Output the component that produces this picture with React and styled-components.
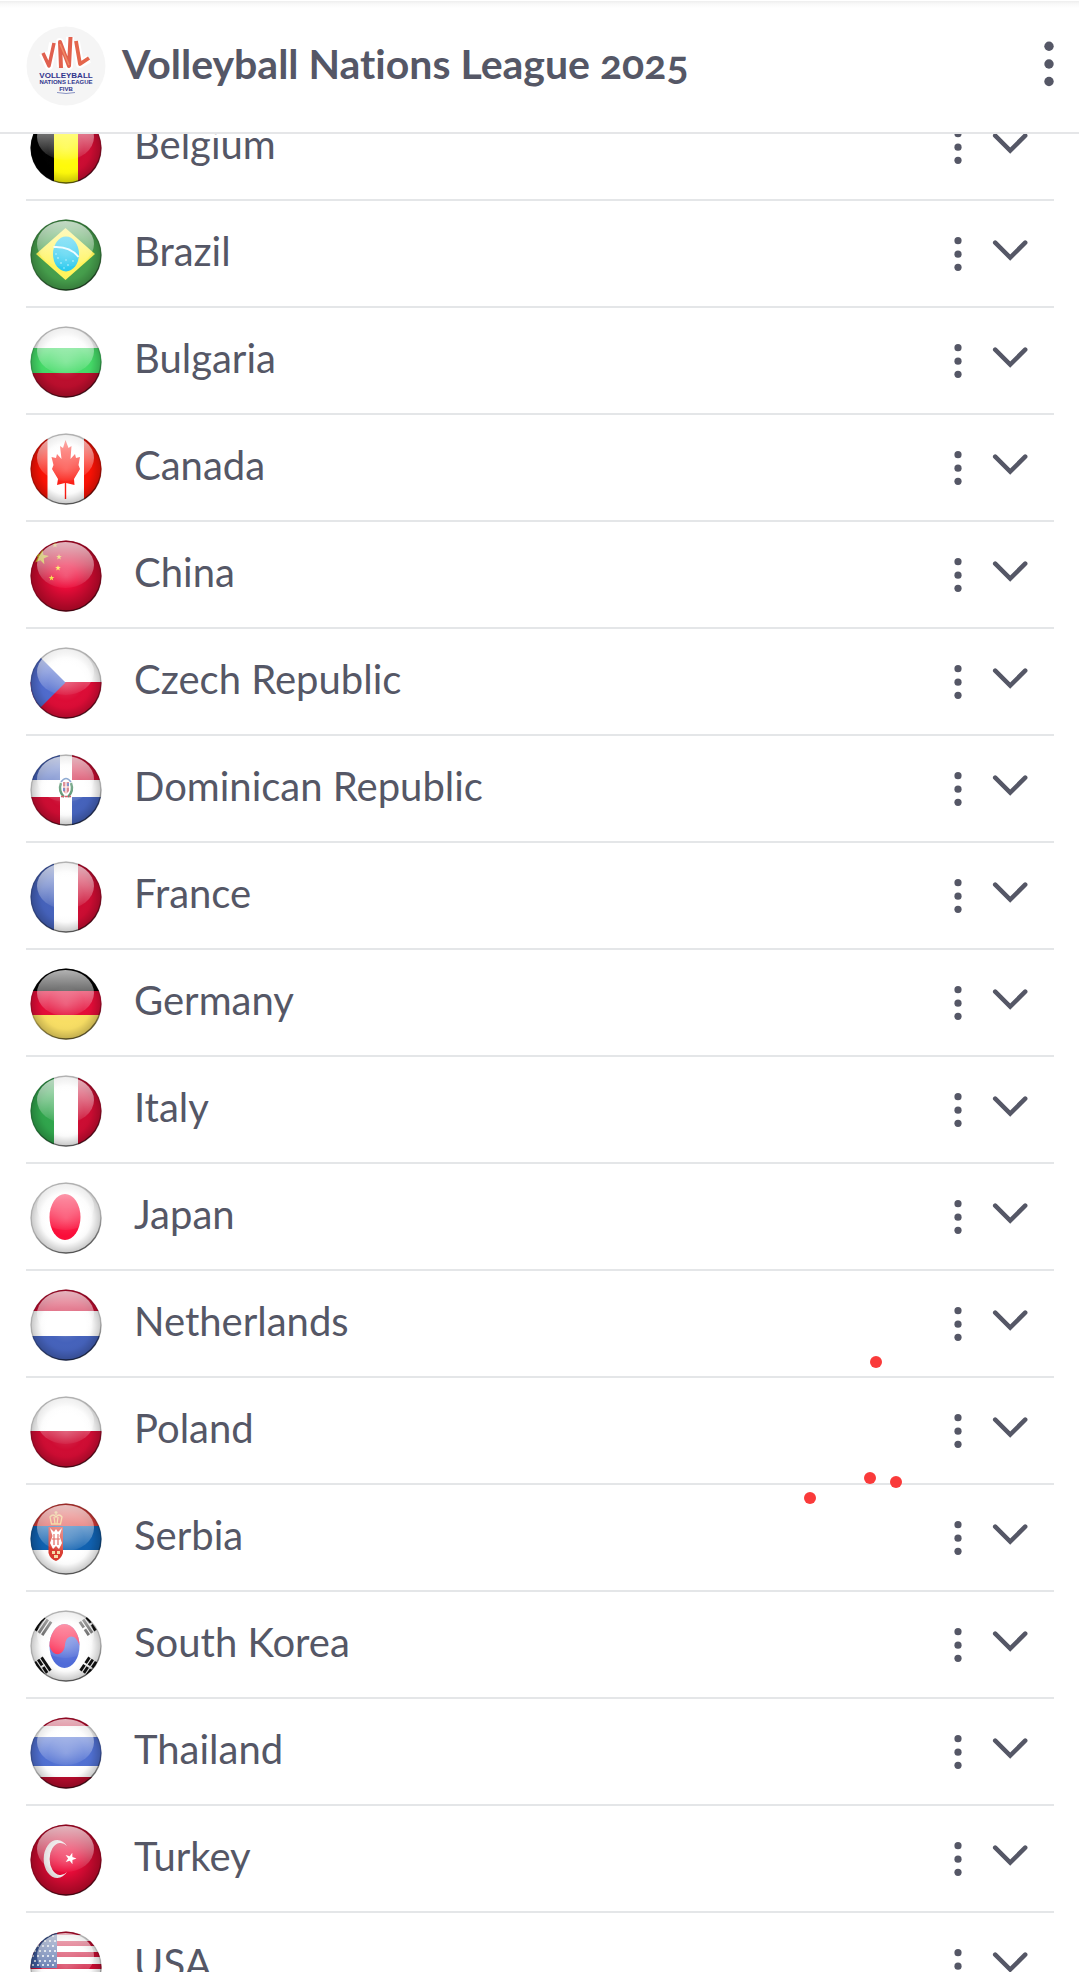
import React from 'react';
import styled, { createGlobalStyle } from 'styled-components';

const star = (cx, cy, r, turn = 0) =>
  Array.from({ length: 10 }, (_, i) => {
    const radius = i % 2 ? r * 0.4 : r;
    const angle = (Math.PI / 5) * i - Math.PI / 2 + turn;
    return `${cx + radius * Math.cos(angle)},${cy + radius * Math.sin(angle)}`;
  }).join(' ');

const RED = '#cc0c32';
const BLUE = '#4562bb';

const Rows = ({ bands }) =>
  bands.map(([color, y, end]) => (
    <rect key={y} x="0" y={y} width="72" height={end - y} fill={color} />
  ));

const Columns = ({ colors }) =>
  colors.map((color, i) => (
    <rect key={color} x={i * 24} y="0" width="24" height="72" fill={color} />
  ));

const Trigram = ({ x, y, turn, broken }) => (
  <g transform={`translate(${x} ${y}) rotate(${turn})`} fill="#111">
    {[-5, -1, 3].map((top, i) => (
      <React.Fragment key={top}>
        <rect x="-8" y={top} width="16" height="2.8" />
        {broken[i] && <rect x="-1" y={top - 1} width="2" height="5" fill="#fff" />}
      </React.Fragment>
    ))}
  </g>
);

const flags = {
  belgium: <Columns colors={['#000', '#fffa0a', RED]} />,
  brazil: (
    <>
      <rect width="72" height="72" fill="#469f4c" />
      <path d="M6 35 35.500 9 65 35 35.500 61Z" fill="#fff45c" />
      <ellipse cx="36" cy="35" rx="13" ry="17.500" fill="#27c9ee" />
      <path d="M23.500 28Q40 27 48.500 38" fill="none" stroke="#e6fbff" strokeWidth="2" />
      <g fill="#c9f6ff">
        <circle cx="28" cy="39" r=".8" />
        <circle cx="31" cy="44" r=".8" />
        <circle cx="36" cy="41" r=".7" />
        <circle cx="38" cy="46" r=".8" />
        <circle cx="43" cy="42" r=".8" />
        <circle cx="34" cy="49" r=".7" />
        <circle cx="26" cy="35" r=".7" />
      </g>
    </>
  ),
  bulgaria: <Rows bands={[['#fff', 0, 22], ['#45db68', 22, 47], ['#bb0e2d', 47, 72]]} />,
  canada: (
    <>
      <rect width="72" height="72" fill="#fff" />
      <path d="M0 0H17.500V72H0ZM54 0H72V72H54Z" fill="#fa1205" />
      <path
        d="M35.500 7 38.500 15 41.500 13 40.500 26 45 21 46 25 50 24 48.500 32 50 36 44 46 44.500 52 36.200 50V66H34.800V50L27 52 28 46 22 36 23.500 32 21.500 24 26 25 27 21 31.500 26 30 13 33 15Z"
        fill="#fb1b12"
      />
    </>
  ),
  china: (
    <>
      <rect width="72" height="72" fill="#ed0c3a" />
      <g fill="#ffe923">
        <polygon points={star(11, 17, 8, 0.2)} />
        <polygon points={star(25, 5, 3)} />
        <polygon points={star(29, 17, 3)} />
        <polygon points={star(28, 28, 3)} />
        <polygon points={star(21.5, 38, 3)} />
      </g>
    </>
  ),
  czech: (
    <>
      <Rows bands={[['#fff', 0, 35], ['#dc0c36', 35, 72]]} />
      <path d="M0 0 35.500 35.500 0 71Z" fill="#4f6bcd" />
    </>
  ),
  dominican: (
    <>
      <rect width="72" height="72" fill="#fff" />
      <path d="M0 0H30V26H0ZM42 43H72V72H42Z" fill={BLUE} />
      <path d="M42 0H72V26H42ZM0 43H30V72H0Z" fill={RED} />
      <path d="M31 28Q36 21 41 28" fill="none" stroke="#3a6ab0" strokeWidth="1.500" />
      <path d="M31 29Q28 37 34 43M41 29Q44 37 38 43" fill="none" stroke="#2f7a4c" strokeWidth="2.400" />
      <path d="M33 28H39V37L36 40 33 37Z" fill="#c94a58" />
      <path d="M36 28V40M33 33H39" stroke="#fff" strokeWidth="1.200" />
      <path d="M37 29h2v3h-2zM33 34h2v3h-2z" fill="#3a50ad" />
      <path d="M31 42.500H41" stroke="#cc3344" strokeWidth="1.500" strokeDasharray="3 1" />
    </>
  ),
  france: <Columns colors={[BLUE, '#fff', RED]} />,
  germany: <Rows bands={[['#000', 0, 23], ['#e40c38', 23, 47], ['#f8de64', 47, 72]]} />,
  italy: <Columns colors={['#30a54c', '#fff', RED]} />,
  japan: (
    <>
      <rect width="72" height="72" fill="#fff" />
      <ellipse cx="35" cy="35" rx="15.500" ry="23" fill="#fa0d39" />
    </>
  ),
  netherlands: <Rows bands={[[RED, 0, 22], ['#fff', 22, 47], [BLUE, 47, 72]]} />,
  poland: <Rows bands={[['#fff', 0, 35], ['#cf0c33', 35, 72]]} />,
  serbia: (
    <>
      <Rows bands={[['#dc3d3a', 0, 23], ['#1061b0', 23, 47], ['#fff', 47, 72]]} />
      <path d="M18.500 24H33V50Q31 56 26 58 20 56 18.500 50Z" fill="#d8392e" />
      <path
        d="M20 25 24 29 26 26 28 29 32 25 29.500 33 32 40 29 46 26 43 23 46 20 40 22.500 33Z"
        fill="#fff"
      />
      <path d="M24 31V42M28 31V42M22 36H30" stroke="#d8392e" strokeWidth="1.200" />
      <path d="M22 48h3v3h-3zM27 48h3v3h-3zM24 52h4v3h-4z" fill="#f6d9a8" />
      <path
        d="M21.500 21 20 14Q23 10 26 14 29 10 32 14L30.500 21ZM26 12V8M24.500 9.500H27.500M24 14 25 21M28 14 27 21"
        fill="none"
        stroke="#eebf62"
        strokeWidth="1.300"
      />
    </>
  ),
  korea: (
    <>
      <rect width="72" height="72" fill="#fff" />
      <ellipse cx="34.500" cy="36" rx="15" ry="22" fill="#4f6bd8" />
      <path
        d="M19.500 36A15 22 0 0 1 49.500 36C47 24 36 23 35 35 34 46 23 48 19.500 36Z"
        fill="#fb1541"
      />
      <Trigram x={13} y={16} turn={-56} broken={[false, false, false]} />
      <Trigram x={58} y={16} turn={56} broken={[true, false, true]} />
      <Trigram x={13} y={56} turn={56} broken={[false, true, false]} />
      <Trigram x={58} y={56} turn={-56} broken={[true, true, true]} />
    </>
  ),
  thailand: (
    <Rows
      bands={[
        [RED, 0, 9],
        ['#fff', 9, 20],
        ['#5070d2', 20, 49],
        ['#fff', 49, 60],
        ['#b50b2c', 60, 72],
      ]}
    />
  ),
  turkey: (
    <>
      <rect width="72" height="72" fill="#ed0c3a" />
      <path d="M37 22A13.500 19 0 1 0 37 48A11 16 0 1 1 37 22Z" fill="#fff" />
      <polygon points={star(40.5, 34.5, 6, 0.3)} fill="#fff" />
    </>
  ),
  usa: (
    <>
      <rect width="72" height="72" fill="#fff" />
      {[-1, 10, 21, 33, 44, 55, 66].map((y) => (
        <rect key={y} y={y} width="72" height="5" fill={RED} />
      ))}
      <rect width="27" height="37" fill="#3f5c9e" />
      {[5, 10, 15, 20, 25, 30, 34].map((y, row) =>
        [3, 8, 13, 18, 23].map((x) => (
          <circle key={`${x}-${y}`} cx={x + (row % 2) * 2} cy={y} r="1" fill="#fff" />
        ))
      )}
    </>
  ),
};

const countries = [
  { name: 'Belgium', flag: 'belgium' },
  { name: 'Brazil', flag: 'brazil' },
  { name: 'Bulgaria', flag: 'bulgaria' },
  { name: 'Canada', flag: 'canada' },
  { name: 'China', flag: 'china' },
  { name: 'Czech Republic', flag: 'czech' },
  { name: 'Dominican Republic', flag: 'dominican' },
  { name: 'France', flag: 'france' },
  { name: 'Germany', flag: 'germany' },
  { name: 'Italy', flag: 'italy' },
  { name: 'Japan', flag: 'japan' },
  { name: 'Netherlands', flag: 'netherlands' },
  { name: 'Poland', flag: 'poland' },
  { name: 'Serbia', flag: 'serbia' },
  { name: 'South Korea', flag: 'korea' },
  { name: 'Thailand', flag: 'thailand' },
  { name: 'Turkey', flag: 'turkey' },
  { name: 'USA', flag: 'usa' },
];

const marks = [
  { right: 197, top: 1356 },
  { right: 203, top: 1472 },
  { right: 177, top: 1476 },
  { right: 263, top: 1492 },
];

const FlagDefs = () => (
  <HiddenSvg aria-hidden="true">
    <defs>
      <clipPath id="ball">
        <circle cx="36" cy="36" r="35.500" />
      </clipPath>
      <radialGradient id="deepShade" cx="50%" cy="50%" r="50%">
        <stop offset="0" stopColor="#fff" stopOpacity=".1" />
        <stop offset=".3" stopColor="#fff" stopOpacity="0" />
        <stop offset=".31" stopColor="#200" stopOpacity="0" />
        <stop offset="1" stopColor="#200" stopOpacity=".42" />
      </radialGradient>
      <radialGradient id="paleShade" cx="50%" cy="50%" r="50%">
        <stop offset="0" stopColor="#fff" stopOpacity=".16" />
        <stop offset=".5" stopColor="#fff" stopOpacity="0" />
        <stop offset=".7" stopColor="#000" stopOpacity=".02" />
        <stop offset="1" stopColor="#000" stopOpacity=".24" />
      </radialGradient>
      <linearGradient id="gloss" x1="0" y1="0" x2="0" y2="1">
        <stop offset="0" stopColor="#fff" stopOpacity=".7" />
        <stop offset=".5" stopColor="#fff" stopOpacity=".4" />
        <stop offset="1" stopColor="#fff" stopOpacity=".05" />
      </linearGradient>
      <linearGradient id="rim" x1=".3" y1="0" x2=".6" y2="1">
        <stop offset="0" stopColor="#000" stopOpacity=".12" />
        <stop offset=".6" stopColor="#000" stopOpacity=".16" />
        <stop offset="1" stopColor="#000" stopOpacity=".6" />
      </linearGradient>
    </defs>
  </HiddenSvg>
);

const deepFlags = ['china', 'turkey'];

const Flag = ({ code }) => (
  <FlagSvg viewBox="0 0 72 72" aria-hidden="true">
    <g clipPath="url(#ball)">
      {flags[code]}
      <circle
        cx="36"
        cy="36"
        r="36"
        fill={deepFlags.includes(code) ? 'url(#deepShade)' : 'url(#paleShade)'}
      />
      <ellipse cx="35.500" cy="25" rx="28.500" ry="23" fill="url(#gloss)" />
    </g>
    <circle cx="36" cy="36" r="35" fill="none" stroke="url(#rim)" strokeWidth="1.500" />
  </FlagSvg>
);

const League = () => (
  <LogoSvg viewBox="0 0 80 80" role="img" aria-label="Volleyball Nations League">
    <circle cx="40" cy="40" r="39.500" fill="#f5f5f5" />
    <g fill="none" strokeLinejoin="round">
      <path
        d="M17 27 23 40 27 17M35 41 34 16 43 40 44 11M50 16 54 38 63 33"
        stroke="#fff"
        strokeWidth="8"
      />
      <path d="M17 27 23 40 28 17" stroke="#e0604f" strokeWidth="3.500" />
      <path d="M35 42 34 16 43 40 44.500 11" stroke="#e2614e" strokeWidth="4" />
      <path d="M50 15 54 38 63 32" stroke="#e4664c" strokeWidth="3.800" />
      <path d="M34 18 43 39" stroke="#f08a66" strokeWidth="1.500" />
    </g>
    <g fill="#30348c" textAnchor="middle">
      <LogoText x="40" y="52" $size={8}>VOLLEYBALL</LogoText>
      <LogoText x="40" y="58" $size={6}>NATIONS LEAGUE</LogoText>
      <LogoText x="40" y="65" $size={6}>FIVB</LogoText>
    </g>
    <path d="M31 66.500Q40 68.500 49 66.500" fill="none" stroke="#6d7ab5" strokeWidth=".8" />
  </LogoSvg>
);

const Dots = () => (
  <svg width="8" height="36" viewBox="0 0 8 36" fill="currentColor" aria-hidden="true">
    <circle cx="4" cy="4.700" r="3.600" />
    <circle cx="4" cy="18.200" r="3.600" />
    <circle cx="4" cy="31.300" r="3.600" />
  </svg>
);

const BigDots = () => (
  <svg width="10" height="46" viewBox="0 0 10 46" fill="currentColor" aria-hidden="true">
    <circle cx="5" cy="5.300" r="4.700" />
    <circle cx="5" cy="23" r="4.700" />
    <circle cx="5" cy="40.500" r="4.700" />
  </svg>
);

const Chevron = () => (
  <svg width="36" height="22" viewBox="0 0 36 22" fill="none" aria-hidden="true">
    <path
      d="M3.200 3.700 18.200 18.500 33.200 3.700"
      stroke="currentColor"
      strokeWidth="4.500"
      strokeLinecap="round"
    />
  </svg>
);

const App = () => {
  return (
    <Page>
      <GlobalStyle />
      <FlagDefs />
      <Header>
        <League />
        <Title>Volleyball Nations League 2025</Title>
        <IconButton type="button" aria-label="League options" $lift={4}>
          <BigDots />
        </IconButton>
      </Header>
      <List>
        {countries.map(({ name, flag }) => (
          <Row key={name}>
            <Flag code={flag} />
            <Name>{name}</Name>
            <Actions>
              <IconButton type="button" aria-label={`${name} options`} $lift={2}>
                <Dots />
              </IconButton>
              <IconButton type="button" aria-label={`Expand ${name}`} $lift={10}>
                <Chevron />
              </IconButton>
            </Actions>
          </Row>
        ))}
      </List>
      {marks.map(({ right, top }) => (
        <Mark key={top} $right={right} $top={top} />
      ))}
    </Page>
  );
};

export default App;

const GlobalStyle = createGlobalStyle`
  * {
    box-sizing: border-box;
  }

  body {
    margin: 0;
    background: #fff;
    color: #555766;
    font-family: Lato, 'Open Sans', sans-serif;
    font-variant-ligatures: none;
  }
`;

const Page = styled.main`
  position: relative;
  height: 100vh;
  overflow: hidden;
`;

const Header = styled.header`
  position: relative;
  z-index: 1;
  display: flex;
  align-items: center;
  padding: 26px 25px 26px 26px;
  border-bottom: 2px solid #e5e6e8;
  background: linear-gradient(#fff 1px, #eee 1px, #f9f9f9 4px, #fff 8px);
`;

const LogoSvg = styled.svg`
  flex: none;
  width: 80px;
  height: 80px;
`;

const LogoText = styled.text`
  font-family: 'Liberation Sans', sans-serif;
  font-weight: 700;
  font-size: ${(props) => props.$size}px;
`;

const Title = styled.h1`
  flex: 1;
  margin: 0;
  padding: 0 16px 4px;
  font-weight: 700;
  font-size: 41px;
  line-height: 48px;
  font-variant-numeric: oldstyle-nums;
`;

/* scrolled so that the first row slides under the header */
const List = styled.ul`
  margin: -40px 25px 0 26px;
  padding: 0;
  list-style: none;
`;

const Row = styled.li`
  display: flex;
  align-items: center;
  padding: 18px 26px 15px 4px;
  border-bottom: 2px solid #e4e6e8;
`;

const FlagSvg = styled.svg`
  flex: none;
  width: 72px;
  height: 72px;
`;

const HiddenSvg = styled.svg`
  position: absolute;
  width: 0;
  height: 0;
`;

const Name = styled.span`
  flex: 1;
  padding: 0 32px 8px;
  font-size: 40px;
  line-height: 48px;
`;

const Actions = styled.div`
  display: flex;
  align-items: center;
  gap: 30px;
`;

const IconButton = styled.button`
  display: flex;
  padding: 0 0 ${(props) => props.$lift}px;
  border: none;
  background: none;
  color: #555766;
  cursor: pointer;
`;

const Mark = styled.i`
  position: absolute;
  z-index: 2;
  top: ${(props) => props.$top}px;
  right: ${(props) => props.$right}px;
  width: 12px;
  height: 12px;
  border-radius: 50%;
  background: #fa3a3a;
`;
